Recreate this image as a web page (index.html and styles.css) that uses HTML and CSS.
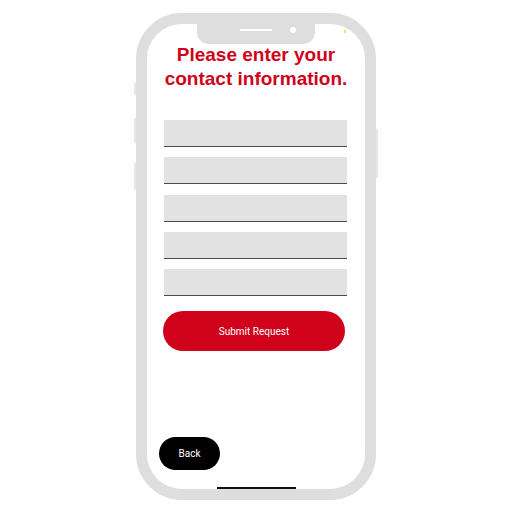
FILE: index.html
```html
<!DOCTYPE html>
<html>
<head>
<meta charset="utf-8">
<link rel="stylesheet" href="styles.css">
</head>
<body>
<div class="phone">
  <span class="side side-l1"></span>
  <span class="side side-l2"></span>
  <span class="side side-l3"></span>
  <span class="side side-r"></span>
  <div class="screen">
    <div class="notch"><span class="speaker"></span><span class="camera"></span></div>
    <span class="spark"></span>
    <h1 class="title">Please enter your<br>contact information.</h1>
    <div class="fields">
      <div class="field"></div>
      <div class="field"></div>
      <div class="field"></div>
      <div class="field"></div>
      <div class="field"></div>
    </div>
    <button class="submit">Submit Request</button>
    <button class="back">Back</button>
    <span class="home"></span>
  </div>
</div>
</body>
</html>
```
FILE: styles.css
```css
html, body {
  margin: 0;
  padding: 0;
  background: #ffffff;
}
body {
  padding: 13px 0 0 136px;
  font-family: "Liberation Sans", Arial, sans-serif;
}
.phone {
  position: relative;
  width: 218px;
  height: 465px;
  border: 11px solid #dedede;
  border-radius: 46px;
  background: #ffffff;
}
.side {
  position: absolute;
  background: #e6e6e6;
  width: 2px;
}
.side-l1 { left: -13px; top: 59px; height: 12px; }
.side-l2 { left: -13px; top: 94px; height: 25px; }
.side-l3 { left: -13px; top: 139px; height: 27px; }
.side-r { right: -13px; top: 105px; height: 49px; }
.screen {
  position: relative;
  height: 100%;
  display: flex;
  flex-direction: column;
  border-radius: 35px;
  overflow: hidden;
}
.notch {
  position: absolute;
  top: 0;
  left: 50px;
  width: 118px;
  height: 20px;
  background: #dedede;
  border-radius: 0 0 12px 12px;
}
.speaker {
  position: absolute;
  left: 43px;
  top: 5px;
  width: 32px;
  height: 2px;
  background: #ffffff;
}
.camera {
  position: absolute;
  left: 93px;
  top: 3px;
  width: 6px;
  height: 6px;
  border-radius: 50%;
  background: #ffffff;
}
.spark {
  position: absolute;
  left: 197px;
  top: 6px;
  width: 2px;
  height: 3px;
  background: #f3e36a;
}
.title {
  margin: 19px 0 0;
  text-align: center;
  color: #d0021b;
  font-size: 19px;
  line-height: 24px;
  font-weight: bold;
}
.fields {
  margin: 29px 18px 0 17px;
  display: flex;
  flex-direction: column;
  gap: 10.25px;
}
.field {
  height: 26px;
  background: #e2e2e2;
  border-bottom: 1px solid #4a4a4a;
}
.submit {
  margin: 15px 20px 0 16px;
  height: 40px;
  border: none;
  border-radius: 20px;
  background: #d0021b;
  color: #ffffff;
  font-family: Roboto, "Liberation Sans", Arial, sans-serif;
  font-size: 10px;
  padding: 0;
}
.back {
  margin: auto 0 19px 12px;
  width: 61px;
  height: 33px;
  border: none;
  border-radius: 17px;
  background: #000000;
  color: #ffffff;
  font-family: Roboto, "Liberation Sans", Arial, sans-serif;
  font-size: 10px;
  padding: 0;
}
.home {
  position: absolute;
  left: 70px;
  bottom: 0;
  width: 79px;
  height: 2px;
  background: #111111;
}
```
